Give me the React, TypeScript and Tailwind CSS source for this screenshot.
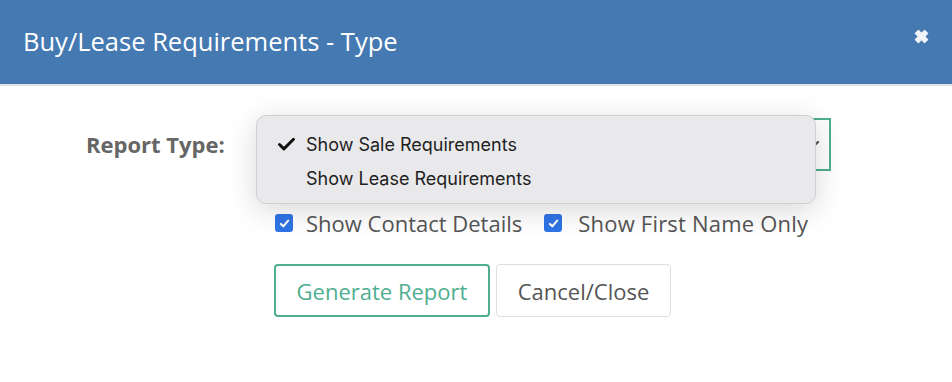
import { Check } from "lucide-react";

const os = { fontFamily: '"Open Sans", "Liberation Sans", sans-serif' };

function Box() {
  return (
    <span className="flex h-[18px] w-[18px] items-center justify-center rounded-[3px] bg-[#2f74e6]">
      <svg viewBox="0 0 16 16" className="h-[13px] w-[13px]" fill="none" stroke="white" strokeWidth="2.6" strokeLinecap="round" strokeLinejoin="round">
        <path d="M3.5 8.5 L6.5 11.5 L12.5 4.5" />
      </svg>
    </span>
  );
}

export default function App() {
  return (
    <div className="h-[382px] w-[952px] overflow-hidden bg-white" style={os}>
      <div className="flex h-[86px] items-center justify-between border-b-2 border-[#e4e4e4] bg-[#4479b2] pl-[23px] pr-[22px]">
        <h1 className="text-[25.5px] leading-none text-white">Buy/Lease Requirements - Type</h1>
        <svg viewBox="0 0 16 16" className="mb-[12px] h-[17px] w-[17px]" fill="#f1f4f8">
          <path d="M2.2 5.1 L5.1 2.2 L8 5.1 L10.9 2.2 L13.8 5.1 L10.9 8 L13.8 10.9 L10.9 13.8 L8 10.9 L5.1 13.8 L2.2 10.9 L5.1 8 Z" stroke="#f1f4f8" strokeWidth="1.2" strokeLinejoin="round" />
        </svg>
      </div>

      <div className="flex pl-[86px] pt-[30px]">
        <div className="w-[170px] pt-[17px] text-[22px] font-bold leading-none text-[#666]">Report Type:</div>
        <div className="flex flex-col">
          <div className="relative h-[53px] w-[575px]">
            <div className="ml-[18px] mt-[2px] flex h-[53px] w-[557px] items-center justify-end border-2 border-[#4fae91] pr-[6px]">
              <svg viewBox="0 0 10 10" className="h-[10px] w-[10px]" fill="none" stroke="#555" strokeWidth="2.2" strokeLinecap="round">
                <path d="M1 6 L5 2" />
              </svg>
            </div>
            <div
              className="absolute left-0 top-[-1px] z-10 h-[89px] w-[560px] rounded-[10px] border border-[#cfcfd2] bg-[#e9e9eb] pt-[16px] shadow-[0_6px_30px_rgba(0,0,0,0.16)]"
              style={{ fontFamily: 'Inter, Roboto, "Liberation Sans", sans-serif' }}
            >
              <div className="flex h-[24px] items-center text-[18px] text-[#1e1e1e]">
                <span className="flex w-[49px] justify-start pl-[19px]">
                  <Check className="h-[21px] w-[21px]" strokeWidth={3.4} color="#111" />
                </span>
                <span>Show Sale Requirements</span>
              </div>
              <div className="mt-[10px] flex h-[24px] items-center pl-[49px] text-[18px] text-[#1e1e1e]">
                Show Lease Requirements
              </div>
            </div>
          </div>

          <div className="ml-[19px] mt-[43px] flex items-center text-[22px] leading-none text-[#555]">
            <Box />
            <span className="ml-[13px]">Show Contact Details</span>
            <span className="ml-[22px]"><Box /></span>
            <span className="ml-[16px] tracking-[0.2px]">Show First Name Only</span>
          </div>

          <div className="ml-[18px] mt-[30px] flex gap-[6px] text-[22px] leading-none">
            <button className="h-[53px] w-[216px] rounded-[4px] border-2 border-[#4fae91] text-[#4fae91]" style={os}>
              Generate Report
            </button>
            <button className="h-[53px] w-[175px] rounded-[4px] border border-[#dedede] text-[#555]" style={os}>
              Cancel/Close
            </button>
          </div>
        </div>
      </div>
    </div>
  );
}
